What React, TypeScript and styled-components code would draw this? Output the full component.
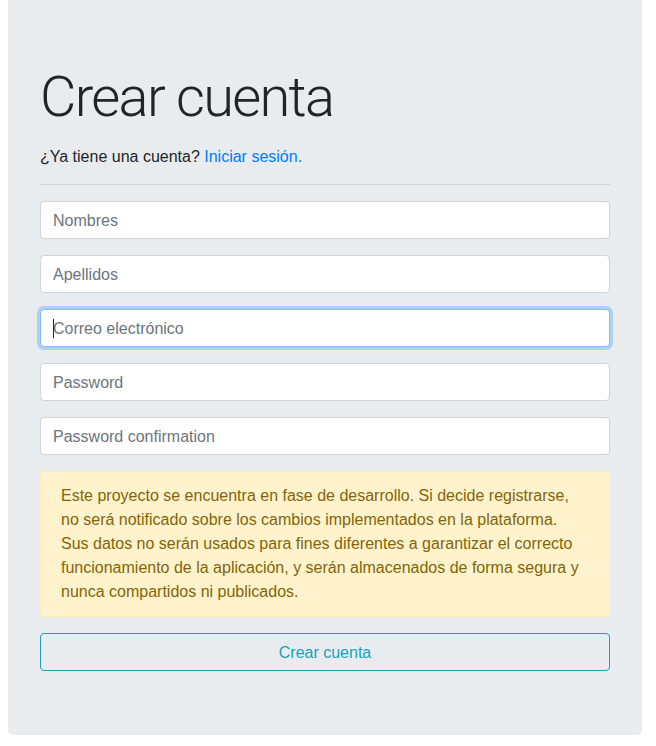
import React from 'react';
import styled, { createGlobalStyle, css } from 'styled-components';

const GlobalStyle = createGlobalStyle`
  *, *::before, *::after {
    box-sizing: border-box;
  }
  body {
    margin: 0;
    padding: 0 8px;
    background: #fff;
    font-family: "Liberation Sans", Arial, sans-serif;
    font-size: 16px;
    line-height: 1.5;
    color: #212529;
  }
`;

const Jumbotron = styled.div`
  width: 634px;
  min-height: 735px;
  padding: 64px 32px;
  background: #e9ecef;
  border-radius: 0 0 5px 5px;
`;

const Title = styled.h1`
  margin: 0 0 14px;
  font-family: Roboto, "Liberation Sans", sans-serif;
  font-size: 56px;
  font-weight: 300;
  line-height: 1.2;
  letter-spacing: -1.7px;
  color: #212529;
`;

const Lead = styled.p`
  margin: 0 0 15px;
  font-size: 16px;
`;

const Link = styled.a`
  color: #007bff;
  text-decoration: none;
`;

const Divider = styled.hr`
  margin: 0 0 16px;
  border: 0;
  border-top: 1px solid rgba(0, 0, 0, 0.1);
`;

const Form = styled.form`
  display: flex;
  flex-direction: column;
  gap: 16px;
`;

const Field = styled.div`
  position: relative;
`;

const Input = styled.input<{ $focused?: boolean }>`
  display: block;
  width: 100%;
  height: 38px;
  padding: 7px 12px 5px;
  font-family: inherit;
  font-size: 16px;
  line-height: 1.5;
  color: #495057;
  background: #fff;
  border: 1px solid #ced4da;
  border-radius: 4px;
  outline: none;
  &::placeholder {
    color: #6c757d;
  }
  ${(p) =>
    p.$focused &&
    css`
      border-color: #80bdff;
      box-shadow: 0 0 0 3px rgba(0, 123, 255, 0.25);
    `}
`;

const Caret = styled.span`
  position: absolute;
  left: 13px;
  top: 10px;
  width: 1px;
  height: 19px;
  background: #212529;
`;

const Alert = styled.div`
  padding: 12px 20px;
  font-size: 16px;
  line-height: 24px;
  color: #856404;
  background: #fff3cd;
  border: 1px solid #ffeeba;
  border-radius: 4px;
`;

const Button = styled.button`
  display: block;
  width: 100%;
  height: 38px;
  padding: 7px 12px 5px;
  font-family: inherit;
  font-size: 16px;
  line-height: 1.5;
  color: #17a2b8;
  background: transparent;
  border: 1px solid #17a2b8;
  border-radius: 4px;
  cursor: pointer;
`;

const fields = [
  { name: 'first_name', placeholder: 'Nombres', type: 'text' },
  { name: 'last_name', placeholder: 'Apellidos', type: 'text' },
  { name: 'email', placeholder: 'Correo electrónico', type: 'email', focused: true },
  { name: 'password', placeholder: 'Password', type: 'password' },
  { name: 'password_confirmation', placeholder: 'Password confirmation', type: 'password' },
];

const App = () => (
  <>
    <GlobalStyle />
    <Jumbotron>
      <Title>Crear cuenta</Title>
      <Lead>
        ¿Ya tiene una cuenta? <Link href="#">Iniciar sesión.</Link>
      </Lead>
      <Divider />
      <Form onSubmit={(e) => e.preventDefault()}>
        {fields.map((f) => (
          <Field key={f.name}>
            <Input
              name={f.name}
              type={f.type}
              placeholder={f.placeholder}
              $focused={f.focused}
            />
            {f.focused && <Caret />}
          </Field>
        ))}
        <Alert>
          Este proyecto se encuentra en fase de desarrollo. Si decide registrarse, no será
          notificado sobre los cambios implementados en la plataforma. Sus datos no serán
          usados para fines diferentes a garantizar el correcto funcionamiento de la
          aplicación, y serán almacenados de forma segura y nunca compartidos ni publicados.
        </Alert>
        <Button type="submit">Crear cuenta</Button>
      </Form>
    </Jumbotron>
  </>
);

export default App;
